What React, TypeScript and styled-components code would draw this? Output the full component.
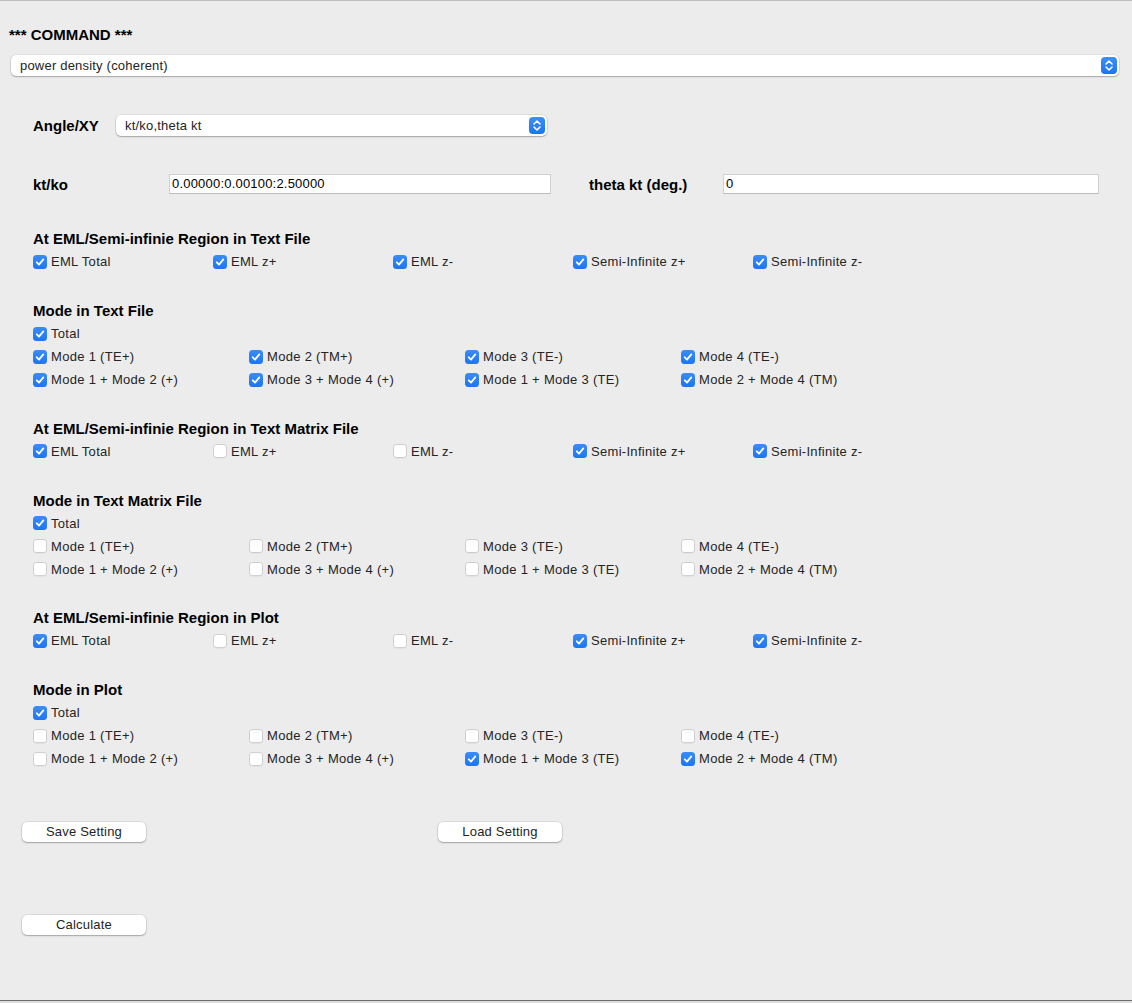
import React from "react";
import styled, { createGlobalStyle } from "styled-components";

const GlobalStyle = createGlobalStyle`
    html, body {
        margin: 0;
        padding: 0;
        background: #ececec;
    }
    * {
        box-sizing: border-box;
    }
`;

const Page = styled.div`
    width: 1132px;
    height: 1003px;
    display: flex;
    flex-direction: column;
    font-family: "Liberation Sans", Arial, Helvetica, sans-serif;
    color: #242424;
    overflow: hidden;
`;

const Window = styled.div`
    height: 1001px;
    background: #ececec;
    border-top: 1px solid #bcbcbc;
    border-bottom: 1px solid #6b6b6b;
    display: flex;
    flex-direction: column;
`;

const BottomStrip = styled.div`
    height: 2px;
    background: #dedede;
`;

const CommandTitle = styled.div`
    margin: 24px 0 0 9px;
    font-size: 15px;
    font-weight: bold;
    line-height: 20px;
    color: #000;
`;

const SelectBox = styled.div<{ $width: number }>`
    width: ${({ $width }) => $width}px;
    height: 21px;
    display: flex;
    align-items: center;
    justify-content: space-between;
    padding: 0 2px 0 9px;
    background: #fff;
    border-radius: 5px;
    box-shadow: 0 0 0 0.5px rgba(0, 0, 0, 0.12), 0 1px 1.5px rgba(0, 0, 0, 0.25);
    font-size: 13px;
    letter-spacing: 0.2px;
    color: #242424;
`;

const ChevronButton = styled.span`
    width: 16px;
    height: 17px;
    border-radius: 4px;
    background: linear-gradient(#3d8ef8, #1a75f3);
    display: flex;
    align-items: center;
    justify-content: center;
`;

const CommandSelect = styled(SelectBox)`
    margin: 10px 0 0 11px;
`;

const Body = styled.div`
    padding-left: 33px;
    display: flex;
    flex-direction: column;
`;

const AngleRow = styled.div`
    margin-top: 39px;
    height: 21px;
    display: flex;
    align-items: center;
`;

const FieldLabel = styled.div<{ $width: number; $gap?: number }>`
    width: ${({ $width }) => $width}px;
    margin-left: ${({ $gap }) => $gap ?? 0}px;
    font-size: 15px;
    font-weight: bold;
    color: #000;
`;

const FieldRow = styled.div`
    margin-top: 38px;
    height: 20px;
    display: flex;
    align-items: center;
`;

const TextInput = styled.div<{ $width: number }>`
    width: ${({ $width }) => $width}px;
    height: 20px;
    background: #fff;
    border: 1px solid #d0d0d0;
    border-bottom-color: #bdbdbd;
    padding: 0 2px;
    font-size: 13px;
    line-height: 18px;
    letter-spacing: 0.2px;
    color: #000;
`;

const Section = styled.div<{ $first?: boolean }>`
    margin-top: ${({ $first }) => ($first ? 33 : 25.5)}px;
    display: flex;
    flex-direction: column;
`;

const SectionTitle = styled.div`
    height: 23px;
    line-height: 23px;
    font-size: 15px;
    font-weight: bold;
    color: #000;
`;

const CheckRow = styled.div<{ $col: number; $count: number; $height?: number }>`
    height: ${({ $height }) => $height ?? 23}px;
    display: grid;
    grid-template-columns: repeat(${({ $count }) => $count}, ${({ $col }) => $col}px);
    align-items: center;
`;

const CheckItem = styled.label`
    display: flex;
    align-items: center;
    gap: 4px;
    font-size: 13px;
    letter-spacing: 0.3px;
    color: #242424;
    white-space: nowrap;
`;

const Box = styled.span<{ $checked: boolean }>`
    width: 14px;
    height: 14px;
    border-radius: 3.5px;
    display: flex;
    align-items: center;
    justify-content: center;
    background: ${({ $checked }) => ($checked ? "linear-gradient(#3a8cf8, #1b76f3)" : "#fff")};
    box-shadow: ${({ $checked }) =>
        $checked ? "none" : "inset 0 0 0 1px #cfcfcf, 0 0.5px 0.5px rgba(0,0,0,0.08)"};
`;

const ButtonRow = styled.div<{ $top: number }>`
    margin-top: ${({ $top }) => $top}px;
    padding-left: 22px;
    display: flex;
    gap: 292px;
`;

const Button = styled.div`
    width: 124px;
    height: 20px;
    background: #fff;
    border-radius: 5px;
    box-shadow: 0 0 0 0.5px rgba(0, 0, 0, 0.14), 0 1px 1.5px rgba(0, 0, 0, 0.25);
    font-size: 13px;
    letter-spacing: 0.2px;
    line-height: 20px;
    text-align: center;
    color: #242424;
`;

const Chevron = () => (
    <ChevronButton>
        <svg width="10" height="13" viewBox="0 0 10 13">
            <path d="M2 5 L5 2 L8 5 M2 8 L5 11 L8 8" fill="none" stroke="#fff" strokeWidth="1.6" strokeLinecap="round" strokeLinejoin="round" />
        </svg>
    </ChevronButton>
);

const Check: React.FC<{ checked: boolean; label: string }> = ({ checked, label }) => (
    <CheckItem>
        <Box $checked={checked}>
            {checked && (
                <svg width="10" height="10" viewBox="0 0 10 10">
                    <path d="M1.8 5.3 L4 7.6 L8.3 2.4" fill="none" stroke="#fff" strokeWidth="1.8" strokeLinecap="round" strokeLinejoin="round" />
                </svg>
            )}
        </Box>
        {label}
    </CheckItem>
);

const regionLabels = ["EML Total", "EML z+", "EML z-", "Semi-Infinite z+", "Semi-Infinite z-"];
const modeRow1 = ["Mode 1 (TE+)", "Mode 2 (TM+)", "Mode 3 (TE-)", "Mode 4 (TE-)"];
const modeRow2 = ["Mode 1 + Mode 2 (+)", "Mode 3 + Mode 4 (+)", "Mode 1 + Mode 3 (TE)", "Mode 2 + Mode 4 (TM)"];

interface RegionProps {
    title: string;
    values: boolean[];
    first?: boolean;
}

const RegionSection: React.FC<RegionProps> = ({ title, values, first }) => (
    <Section $first={first}>
        <SectionTitle>{title}</SectionTitle>
        <CheckRow $col={180} $count={5} $height={23.5}>
            {regionLabels.map((l, i) => (
                <Check key={l} label={l} checked={values[i]} />
            ))}
        </CheckRow>
    </Section>
);

interface ModeProps {
    title: string;
    total: boolean;
    row1: boolean[];
    row2: boolean[];
}

const ModeSection: React.FC<ModeProps> = ({ title, total, row1, row2 }) => (
    <Section>
        <SectionTitle>{title}</SectionTitle>
        <CheckRow $col={216} $count={1}>
            <Check label="Total" checked={total} />
        </CheckRow>
        <CheckRow $col={216} $count={4}>
            {modeRow1.map((l, i) => (
                <Check key={l} label={l} checked={row1[i]} />
            ))}
        </CheckRow>
        <CheckRow $col={216} $count={4}>
            {modeRow2.map((l, i) => (
                <Check key={l} label={l} checked={row2[i]} />
            ))}
        </CheckRow>
    </Section>
);

const all = (v: boolean, n: number) => Array.from({ length: n }, () => v);

export default function App() {
    return (
        <Page>
            <GlobalStyle />
            <Window>
                <CommandTitle>*** COMMAND ***</CommandTitle>
                <CommandSelect $width={1108}>
                    <span>power density (coherent)</span>
                    <Chevron />
                </CommandSelect>
                <Body>
                    <AngleRow>
                        <FieldLabel $width={83}>Angle/XY</FieldLabel>
                        <SelectBox $width={431}>
                            <span>kt/ko,theta kt</span>
                            <Chevron />
                        </SelectBox>
                    </AngleRow>
                    <FieldRow>
                        <FieldLabel $width={136}>kt/ko</FieldLabel>
                        <TextInput $width={382}>0.00000:0.00100:2.50000</TextInput>
                        <FieldLabel $width={134} $gap={38}>
                            theta kt (deg.)
                        </FieldLabel>
                        <TextInput $width={376}>0</TextInput>
                    </FieldRow>

                    <RegionSection first title="At EML/Semi-infinie Region in Text File" values={all(true, 5)} />
                    <ModeSection title="Mode in Text File" total row1={all(true, 4)} row2={all(true, 4)} />
                    <RegionSection
                        title="At EML/Semi-infinie Region in Text Matrix File"
                        values={[true, false, false, true, true]}
                    />
                    <ModeSection title="Mode in Text Matrix File" total row1={all(false, 4)} row2={all(false, 4)} />
                    <RegionSection
                        title="At EML/Semi-infinie Region in Plot"
                        values={[true, false, false, true, true]}
                    />
                    <ModeSection
                        title="Mode in Plot"
                        total
                        row1={all(false, 4)}
                        row2={[false, false, true, true]}
                    />
                </Body>
                <ButtonRow $top={52}>
                    <Button>Save Setting</Button>
                    <Button>Load Setting</Button>
                </ButtonRow>
                <ButtonRow $top={73}>
                    <Button>Calculate</Button>
                </ButtonRow>
            </Window>
            <BottomStrip />
        </Page>
    );
}
